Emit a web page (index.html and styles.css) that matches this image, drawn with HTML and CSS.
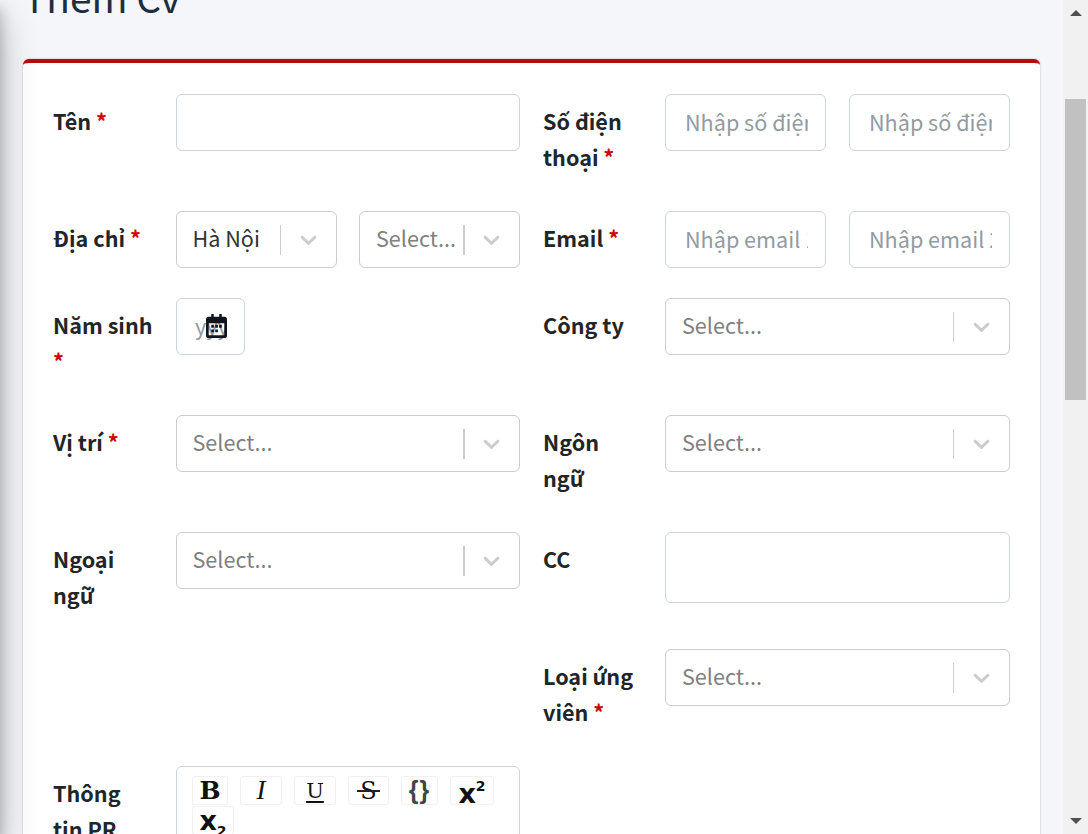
FILE: index.html
```html
<!DOCTYPE html>
<html lang="vi">
<head>
    <meta charset="UTF-8">
    <meta name="viewport" content="width=device-width, initial-scale=1.0">
    <title>Thêm Cv</title>
    <link rel="stylesheet" href="styles.css">
</head>
<body>
    <div class="app">
        <div class="sidebar-edge"></div>
        <main class="content">
            <h1 class="page-title">Thêm Cv</h1>
            <section class="card">
                <div class="form-grid">
                    <div class="field">
                        <label class="field-label">Tên <span class="req">*</span></label>
                        <input class="text-input" type="text">
                    </div>
                    <div class="field">
                        <label class="field-label">Số điện thoại <span class="req">*</span></label>
                        <div class="pair">
                            <input class="text-input" type="text" placeholder="Nhập số điện thoại">
                            <input class="text-input" type="text" placeholder="Nhập số điện thoại">
                        </div>
                    </div>

                    <div class="field field-short">
                        <label class="field-label">Địa chỉ <span class="req">*</span></label>
                        <div class="pair">
                            <div class="select select-left">
                                <span class="select-value">Hà Nội</span>
                                <span class="select-sep"></span>
                                <svg class="select-arrow" viewBox="0 0 20 20"><path d="M4.516 7.548c.436-.446 1.043-.481 1.576 0L10 11.295l3.908-3.747c.533-.481 1.141-.446 1.574 0 .436.445.408 1.197 0 1.615-.406.418-4.695 4.502-4.695 4.502a1.095 1.095 0 0 1-1.576 0S4.924 9.581 4.516 9.163s-.436-1.17 0-1.615z"/></svg>
                            </div>
                            <div class="select select-wide">
                                <span class="select-ph">Select...</span>
                                <span class="select-sep"></span>
                                <svg class="select-arrow" viewBox="0 0 20 20"><path d="M4.516 7.548c.436-.446 1.043-.481 1.576 0L10 11.295l3.908-3.747c.533-.481 1.141-.446 1.574 0 .436.445.408 1.197 0 1.615-.406.418-4.695 4.502-4.695 4.502a1.095 1.095 0 0 1-1.576 0S4.924 9.581 4.516 9.163s-.436-1.17 0-1.615z"/></svg>
                            </div>
                        </div>
                    </div>
                    <div class="field field-short">
                        <label class="field-label">Email <span class="req">*</span></label>
                        <div class="pair">
                            <input class="text-input" type="text" placeholder="Nhập email 1">
                            <input class="text-input" type="text" placeholder="Nhập email 2">
                        </div>
                    </div>

                    <div class="field">
                        <label class="field-label">Năm sinh <span class="req">*</span></label>
                        <div class="date-input">
                            <span class="date-ph">yyyy</span>
                            <svg class="date-icon" viewBox="2 1.5 20 21" preserveAspectRatio="none"><path d="M7 1.5h2.4V4h5.2V1.500H17V4h2.500A2.500 2.500 0 0 1 22 6.500V20a2.500 2.500 0 0 1-2.500 2.500h-15A2.500 2.500 0 0 1 2 20V6.500A2.500 2.500 0 0 1 4.500 4H7zM4.600 9.500V20h14.800V9.500zM7 11h2.500v2.500H7zm3.800 0h2.500v2.500h-2.500zm3.800 0h2.500v2.500h-2.500zM7 15h2.500v2.500H7zm3.800 0h2.500v2.500h-2.500z"/></svg>
                        </div>
                    </div>
                    <div class="field">
                        <label class="field-label">Công ty</label>
                        <div class="select">
                            <span class="select-ph">Select...</span>
                            <span class="select-sep"></span>
                            <svg class="select-arrow" viewBox="0 0 20 20"><path d="M4.516 7.548c.436-.446 1.043-.481 1.576 0L10 11.295l3.908-3.747c.533-.481 1.141-.446 1.574 0 .436.445.408 1.197 0 1.615-.406.418-4.695 4.502-4.695 4.502a1.095 1.095 0 0 1-1.576 0S4.924 9.581 4.516 9.163s-.436-1.17 0-1.615z"/></svg>
                        </div>
                    </div>

                    <div class="field">
                        <label class="field-label">Vị trí <span class="req">*</span></label>
                        <div class="select select-left select-wide">
                            <span class="select-ph">Select...</span>
                            <span class="select-sep"></span>
                            <svg class="select-arrow" viewBox="0 0 20 20"><path d="M4.516 7.548c.436-.446 1.043-.481 1.576 0L10 11.295l3.908-3.747c.533-.481 1.141-.446 1.574 0 .436.445.408 1.197 0 1.615-.406.418-4.695 4.502-4.695 4.502a1.095 1.095 0 0 1-1.576 0S4.924 9.581 4.516 9.163s-.436-1.17 0-1.615z"/></svg>
                        </div>
                    </div>
                    <div class="field">
                        <label class="field-label">Ngôn ngữ</label>
                        <div class="select">
                            <span class="select-ph">Select...</span>
                            <span class="select-sep"></span>
                            <svg class="select-arrow" viewBox="0 0 20 20"><path d="M4.516 7.548c.436-.446 1.043-.481 1.576 0L10 11.295l3.908-3.747c.533-.481 1.141-.446 1.574 0 .436.445.408 1.197 0 1.615-.406.418-4.695 4.502-4.695 4.502a1.095 1.095 0 0 1-1.576 0S4.924 9.581 4.516 9.163s-.436-1.17 0-1.615z"/></svg>
                        </div>
                    </div>

                    <div class="field">
                        <label class="field-label">Ngoại ngữ</label>
                        <div class="select select-left select-wide">
                            <span class="select-ph">Select...</span>
                            <span class="select-sep"></span>
                            <svg class="select-arrow" viewBox="0 0 20 20"><path d="M4.516 7.548c.436-.446 1.043-.481 1.576 0L10 11.295l3.908-3.747c.533-.481 1.141-.446 1.574 0 .436.445.408 1.197 0 1.615-.406.418-4.695 4.502-4.695 4.502a1.095 1.095 0 0 1-1.576 0S4.924 9.581 4.516 9.163s-.436-1.17 0-1.615z"/></svg>
                        </div>
                    </div>
                    <div class="field">
                        <label class="field-label">CC</label>
                        <div class="cc-input"></div>
                    </div>

                    <div class="field"></div>
                    <div class="field">
                        <label class="field-label">Loại ứng viên <span class="req">*</span></label>
                        <div class="select">
                            <span class="select-ph">Select...</span>
                            <span class="select-sep"></span>
                            <svg class="select-arrow" viewBox="0 0 20 20"><path d="M4.516 7.548c.436-.446 1.043-.481 1.576 0L10 11.295l3.908-3.747c.533-.481 1.141-.446 1.574 0 .436.445.408 1.197 0 1.615-.406.418-4.695 4.502-4.695 4.502a1.095 1.095 0 0 1-1.576 0S4.924 9.581 4.516 9.163s-.436-1.17 0-1.615z"/></svg>
                        </div>
                    </div>

                    <div class="field">
                        <label class="field-label">Thông tin PR</label>
                        <div class="editor">
                            <div class="toolbar">
                                <button class="tool tool-b">B</button>
                                <button class="tool tool-i">I</button>
                                <button class="tool tool-u"><span>U</span></button>
                                <button class="tool tool-s">S</button>
                                <button class="tool tool-code">{}</button>
                                <button class="tool tool-x tool-sup"><span>x<sup>2</sup></span></button>
                                <button class="tool tool-x tool-sub"><span>x<sub>2</sub></span></button>
                            </div>
                        </div>
                    </div>
                </div>
            </section>
        </main>
        <div class="scrollbar">
            <span class="scroll-up"></span>
            <div class="scroll-track"><div class="scroll-thumb"></div></div>
            <span class="scroll-down"></span>
        </div>
    </div>
</body>
</html>
```

FILE: styles.css
```css
* {
    box-sizing: border-box;
}

html, body {
    margin: 0;
    height: 100%;
    overflow: hidden;
}

body {
    font-family: "Noto Sans CJK SC", "Noto Sans", sans-serif;
    font-size: 21.6px;
    color: #1f2d3d;
    background-color: #f4f6f9;
}

.app {
    display: flex;
    height: 834px;
    position: relative;
}

/* the sidebar is off screen, only its shadow falls on the page */
.sidebar-edge {
    position: absolute;
    z-index: 2;
    left: -100px;
    top: -4px;
    bottom: 0;
    width: 100px;
    box-shadow: 0 19px 38px rgba(0, 0, 0, 0.25), 0 13px 13px rgba(0, 0, 0, 0.22);
}

.content {
    flex: 1;
    padding: 0 23px;
    overflow: hidden;
}

.page-title {
    margin: -31px 0 0;
    height: 90px;
    font-size: 38.88px;
    font-weight: 400;
    line-height: 54px;
    color: #1f2d3d;
}

.card {
    background-color: #fff;
    border-top: 4px solid #b80a10;
    border-radius: 6px 6px 0 0;
    box-shadow: 0 0 2px rgba(0, 0, 0, 0.3);
    padding: 31px 30px 0;
    height: 900px;
}

.form-grid {
    display: grid;
    grid-template-columns: 467px 467px;
    column-gap: 23px;
    align-items: start;
}

.field {
    display: grid;
    grid-template-columns: 123px 1fr;
    min-height: 117px;
}

.field:nth-child(even) {
    grid-template-columns: 122px 1fr;
}

.field-short {
    min-height: 87px;
}

.field-label {
    font-weight: 700;
    line-height: 36px;
    padding: 9px 22.5px 0 0;
    color: #212529;
}

.field:nth-child(even) .field-label {
    padding-right: 24px;
}

.req {
    color: #d00000;
}

.pair {
    display: grid;
    grid-template-columns: 161px 161px;
    justify-content: space-between;
}

.text-input,
.select,
.date-input,
.cc-input {
    height: 57px;
    background-color: #fff;
    border: 1px solid #ced4da;
    border-radius: 6px;
}

.text-input {
    width: 100%;
    padding: 5px 17px 7px 19px;
    font-family: inherit;
    font-size: 21.6px;
    color: #495057;
    outline: none;
}

.text-input::placeholder {
    color: #939ba2;
    opacity: 1;
}

.cc-input {
    height: 71px;
}

.select {
    display: flex;
    align-items: center;
    padding-left: 16px;
    border-color: #ccc;
    overflow: hidden;
}

.select-left {
    padding-left: 15.5px;
}

.select-value,
.select-ph {
    flex: 1;
    white-space: nowrap;
    min-width: 0;
    padding-bottom: 4px;
}

.select-value {
    color: #333;
}

.select-ph {
    color: #808080;
}

.select-sep {
    flex: none;
    width: 1px;
    height: 30px;
    background-color: #ccc;
}

.select-arrow {
    flex: none;
    width: 27px;
    height: 27px;
    margin: 0 14px;
    fill: #ccc;
}

.select-wide .select-sep {
    width: 2px;
}

.select-wide .select-arrow {
    margin: 0 14px 0 13px;
}

.date-input {
    width: 69px;
    display: flex;
    align-items: center;
    padding: 0 0 2px 18px;
    position: relative;
}

.date-ph {
    width: 30px;
    overflow: hidden;
    color: #939ba2;
}

.date-icon {
    position: absolute;
    left: 29px;
    top: 15px;
    width: 21px;
    height: 24px;
    fill: #10141c;
}

.editor {
    height: 200px;
    border: 1px solid #ced4da;
    border-radius: 6px;
    padding: 9px 15px;
}

.toolbar {
    display: flex;
    flex-wrap: wrap;
    column-gap: 12px;
    row-gap: 1px;
}

.tool {
    display: flex;
    align-items: center;
    justify-content: center;
    height: 29px;
    width: 42px;
    padding: 0;
    background-color: #fff;
    border: 1px solid #f1f1f1;
    border-radius: 3px;
    color: #111;
    white-space: nowrap;
}

.tool-b {
    width: 36px;
    font-family: "DejaVu Serif", serif;
    font-weight: 700;
    font-size: 25px;
}

.tool-i {
    font-family: "Liberation Serif", serif;
    font-style: italic;
    font-size: 27px;
}

.tool-u {
    font-family: "DejaVu Serif", serif;
    font-size: 21px;
}

.tool-u span {
    text-decoration: underline;
    text-decoration-thickness: 1.5px;
    text-underline-offset: 3px;
}

.tool-s {
    width: 41px;
    position: relative;
    font-family: "DejaVu Serif", serif;
    font-size: 24px;
}

.tool-s::after {
    content: "";
    position: absolute;
    left: 8px;
    right: 8px;
    top: 13px;
    height: 2px;
    background-color: #222;
}

.tool-code {
    width: 37px;
    font-family: "Liberation Sans", sans-serif;
    font-weight: 700;
    font-size: 25px;
    letter-spacing: 1px;
    color: #444;
}

.tool-x {
    width: 44px;
    font-family: "DejaVu Sans", sans-serif;
    font-weight: 700;
    font-size: 27px;
}

.tool-sup {
    padding-top: 6px;
}

.tool-sub {
    width: 42px;
}

.tool-x sup,
.tool-x sub {
    font-size: 14px;
    line-height: 0;
}

.tool-x sup {
    vertical-align: 12px;
}

.tool-x sub {
    vertical-align: -6px;
}

.scrollbar {
    flex: none;
    width: 25px;
    display: flex;
    flex-direction: column;
    background-color: #f1f1f1;
}

.scroll-up,
.scroll-down {
    flex: none;
    height: 0;
    width: 0;
    margin: 0 auto;
    border: 6px solid transparent;
}

.scroll-up {
    margin-top: 10px;
    border-top-width: 0;
    border-bottom: 6px solid #505050;
}

.scroll-down {
    margin-bottom: 10px;
    border-bottom-width: 0;
    border-top: 6px solid #505050;
}

.scroll-track {
    flex: 1;
    padding: 83px 2px 0;
}

.scroll-thumb {
    height: 301px;
    background-color: #c1c1c1;
}
```
